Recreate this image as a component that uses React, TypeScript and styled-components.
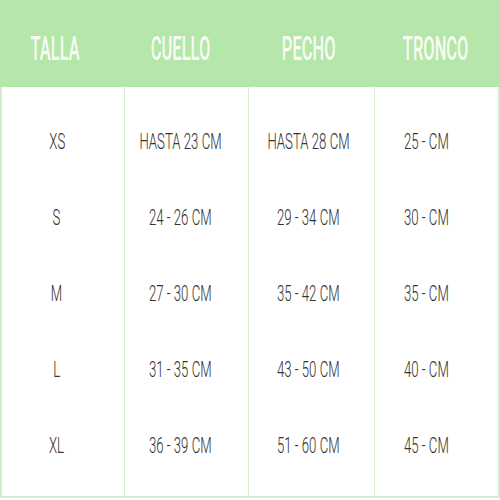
import React from 'react';
import styled, { createGlobalStyle } from 'styled-components';

const Global = createGlobalStyle`
  html, body {
    margin: 0;
    padding: 0;
    background: #ffffff;
  }
`;

const Table = styled.div`
  width: 500px;
  height: 500px;
  box-sizing: border-box;
  display: flex;
  flex-direction: column;
  font-family: Roboto, "Liberation Sans", sans-serif;
`;

const Head = styled.div`
  height: 87px;
  background: #b5e6aa;
  display: grid;
  grid-template-columns: 125px 124px 126px 125px;
  align-items: center;
`;

const HeadCell = styled.div<{ $shift?: number }>`
  display: flex;
  justify-content: center;
  padding-right: ${p => p.$shift || 0}px;
  padding-top: 10px;
`;

const HeadText = styled.span`
  display: inline-block;
  color: #f7fdf4;
  font-size: 33px;
  font-weight: 500;
  transform: scaleX(0.5);
  white-space: nowrap;
`;

const Body = styled.div`
  height: 411px;
  box-sizing: border-box;
  border: 2px solid #d3ecce;
  border-top: none;
  display: grid;
  grid-template-columns: 123px 124px 126px 125px;
`;

const Column = styled.div<{ $last?: boolean }>`
  display: flex;
  flex-direction: column;
  padding: 16px 0 12px;
  border-right: ${p => (p.$last ? 'none' : '1px solid #d8eed3')};
`;

const Cell = styled.div<{ $shift?: number }>`
  height: 76px;
  display: flex;
  align-items: center;
  justify-content: center;
  padding-right: ${p => p.$shift || 0}px;
`;

const CellText = styled.span`
  display: inline-block;
  color: #333333;
  font-size: 22px;
  font-weight: 300;
  transform: scaleX(0.6);
  white-space: nowrap;
`;

const columns = [
  { title: 'TALLA', headShift: 14, shift: 12, values: ['XS', 'S', 'M', 'L', 'XL'] },
  { title: 'CUELLO', headShift: 12, shift: 12, values: ['HASTA 23 CM', '24 - 26 CM', '27 - 30 CM', '31 - 35 CM', '36 - 39 CM'] },
  { title: 'PECHO', headShift: 6, shift: 6, values: ['HASTA 28 CM', '29 - 34 CM', '35 - 42 CM', '43 - 50 CM', '51 - 60 CM'] },
  { title: 'TRONCO', headShift: 4, shift: 22, values: ['25 - CM', '30 - CM', '35 - CM', '40 - CM', '45 - CM'] },
];

export default function App() {
  return (
    <Table>
      <Global />
      <Head>
        {columns.map(c => (
          <HeadCell key={c.title} $shift={c.headShift}>
            <HeadText>{c.title}</HeadText>
          </HeadCell>
        ))}
      </Head>
      <Body>
        {columns.map((c, i) => (
          <Column key={c.title} $last={i === columns.length - 1}>
            {c.values.map(v => (
              <Cell key={v} $shift={c.shift}>
                <CellText>{v}</CellText>
              </Cell>
            ))}
          </Column>
        ))}
      </Body>
    </Table>
  );
}
